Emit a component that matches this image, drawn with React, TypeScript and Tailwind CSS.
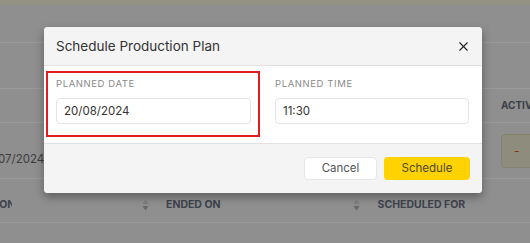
import { X } from "lucide-react";

const font = { fontFamily: "Inter, 'Noto Sans', sans-serif" };

function SortArrows() {
    return (
        <svg width="7" height="12" viewBox="0 0 7 12" className="shrink-0">
            <path d="M3.5 0.5 L6.5 5 L0.5 5 Z" fill="#7d7d7d" />
            <path d="M3.5 11.5 L6.5 7 L0.5 7 Z" fill="#676767" />
        </svg>
    );
}

function Field({ label, value }: { label: string; value: string }) {
    return (
        <div className="flex flex-col">
            <label className="text-[9.5px] leading-[12px] tracking-[0.6px] text-[#8a8a8a] uppercase">
                {label}
            </label>
            <input
                readOnly
                value={value}
                className="mt-[8px] h-[26px] rounded-[4px] border border-[#e4e4e4] px-[7px] text-[11.5px] text-[#333] outline-none"
            />
        </div>
    );
}

export default function App() {
    return (
        <div className="relative h-[243px] w-[530px] overflow-hidden bg-[#8f8f8f]" style={font}>
            {/* dimmed page behind the dialog */}
            <div className="h-[5px] bg-[#939181]" />
            <div className="h-[38px] border-b border-[#999]" />
            <div className="h-[46px] border-b border-[#999]" />
            <div className="flex h-[34px] items-center border-b border-[#999]">
                <span className="ml-[501px] whitespace-nowrap text-[10px] font-bold text-[#3b3f47]">ACTIVATE</span>
            </div>
            <div className="flex h-[56px] items-center border-b border-[#999]">
                <div className="w-[44px] shrink-0 overflow-hidden pt-[19px]">
                    <span className="ml-[-18px] block whitespace-nowrap text-[11.5px] text-[#3c3c3c]">01/07/2024</span>
                </div>
                <div className="ml-[457px] flex h-[34px] w-[40px] shrink-0 items-center rounded-[4px] border border-[#84826f] bg-[#8e8c7d] pl-[12px] text-[12px] text-[#8a2d10]">
                    -
                </div>
            </div>
            <div className="flex h-[44px] items-center border-b border-[#999] pt-[9px] text-[10.5px] font-bold text-[#3e434d]">
                <div className="w-[12px] shrink-0 overflow-hidden">
                    <span className="ml-[-52px] block whitespace-nowrap">STARTED ON</span>
                </div>
                <div className="ml-[130px]">
                    <SortArrows />
                </div>
                <span className="ml-[17px] whitespace-nowrap">ENDED ON</span>
                <div className="ml-[132px]">
                    <SortArrows />
                </div>
                <span className="ml-[18px] whitespace-nowrap">SCHEDULED FOR</span>
            </div>

            {/* dialog */}
            <div className="absolute left-[44px] top-[27px] w-[438px] overflow-hidden rounded-[4px] bg-white shadow-[0_4px_10px_rgba(0,0,0,0.35)]">
                <div className="flex h-[39px] items-center justify-between border-b border-[#e2e2e2] bg-[#f4f4f4] pl-[12px] pr-[11px]">
                    <h2 className="text-[13.5px] text-[#333]">Schedule Production Plan</h2>
                    <X size={15} strokeWidth={1.7} className="text-[#222]" />
                </div>

                <div className="flex pb-[6px] pl-[2px] pt-[5px]">
                    <div className="w-[214px] border-2 border-[#e21d1d] pb-[11px] pl-[8px] pr-[7px] pt-[5px]">
                        <Field label="Planned Date" value="20/08/2024" />
                    </div>
                    <div className="ml-[15px] w-[194px] pt-[7px]">
                        <Field label="Planned Time" value="11:30" />
                    </div>
                </div>

                <div className="flex justify-end gap-[7px] border-t border-[#e2e2e2] bg-[#f4f4f4] pb-[13px] pr-[12px] pt-[13px]">
                    <button className="h-[23px] w-[73px] rounded-[4px] border border-[#e6e6e6] bg-white text-[11.5px] text-[#555]">
                        Cancel
                    </button>
                    <button className="h-[23px] w-[86px] rounded-[4px] bg-[#ffd200] text-[11.5px] text-[#4a4a3a]">
                        Schedule
                    </button>
                </div>
            </div>
        </div>
    );
}
